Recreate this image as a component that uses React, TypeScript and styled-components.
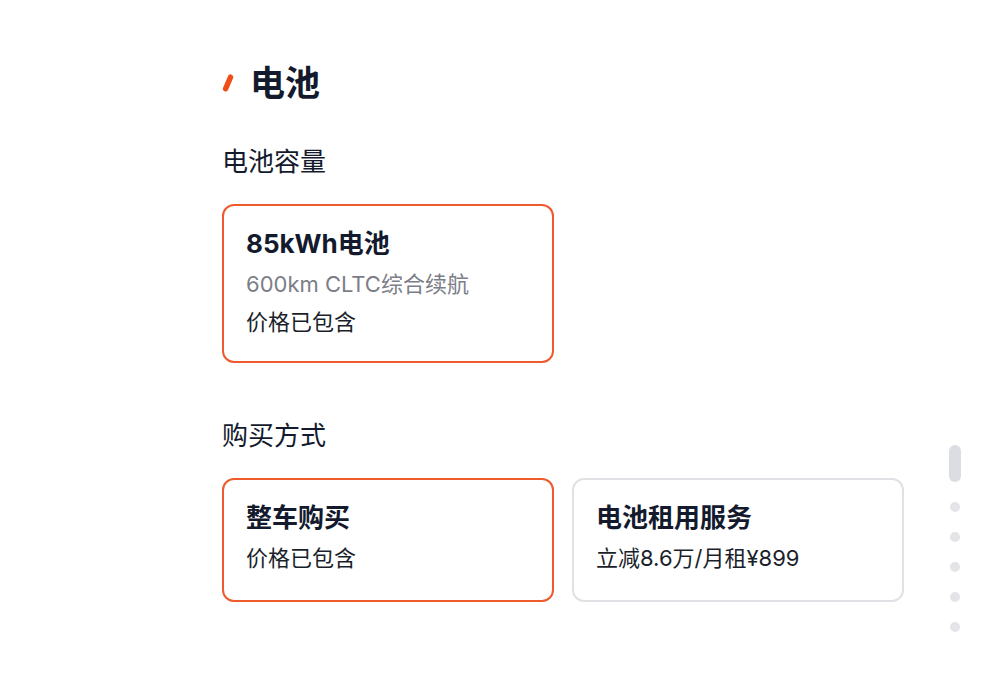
import React from "react";
import styled, { createGlobalStyle } from "styled-components";

const GlobalStyle = createGlobalStyle`
  html, body {
    margin: 0;
    padding: 0;
    background: #ffffff;
  }
  body {
    font-family: Inter, "Noto Sans CJK SC", sans-serif;
    color: #141a2e;
  }
`;

const Page = styled.div`
  padding: 61px 0 40px 222px;
  min-height: 696px;
  box-sizing: border-box;
`;

const Heading = styled.div`
  display: flex;
  align-items: center;
  gap: 16px;
  margin-bottom: 40px;

  & h2 {
    margin: 0;
    font-size: 35px;
    line-height: 44px;
    font-weight: 700;
    color: #141a2e;
  }
`;

const SectionLabel = styled.div<{ $top?: number }>`
  font-size: 26px;
  line-height: 34px;
  font-weight: 400;
  color: #141a2e;
  margin-top: ${(p) => p.$top || 0}px;
  margin-bottom: 25px;
`;

const Options = styled.div<{ $minHeight?: number }>`
  display: grid;
  grid-template-columns: 332px 332px;
  column-gap: 18px;
  & > * {
    min-height: ${(p) => p.$minHeight || 0}px;
  }
`;

const Card = styled.div<{ $active?: boolean }>`
  box-sizing: border-box;
  border: 2px solid ${(p) => (p.$active ? "#ee5a2b" : "#e0e1e4")};
  border-radius: 12px;
  padding: 22px 22px 20px 22px;
  background: #ffffff;

  .card-title {
    font-size: 26px;
    line-height: 32px;
    font-weight: 700;
    color: #141a2e;
    margin-bottom: 5px;
  }

  .card-line {
    font-size: 22px;
    line-height: 38px;
    color: #1b1f2c;

    &.muted {
      color: #7b7e88;
    }
  }
`;

const ScrollDots = styled.div`
  position: fixed;
  right: 42px;
  top: 445px;
  display: flex;
  flex-direction: column;
  align-items: center;
  gap: 20px;
`;

const Dot = styled.span<{ $active?: boolean }>`
  display: block;
  width: ${(p) => (p.$active ? 12 : 10)}px;
  height: ${(p) => (p.$active ? 37 : 10)}px;
  border-radius: 6px;
  background: ${(p) => (p.$active ? "#dcdde2" : "#e3e4e8")};
`;

const Slash = () => (
  <svg width="12" height="18" viewBox="0 0 12 18">
    <line
      x1="8.5"
      y1="3.2"
      x2="3.6"
      y2="14.8"
      stroke="#f04d17"
      strokeWidth="5.5"
      strokeLinecap="round"
    />
  </svg>
);

export default function App() {
  return (
    <>
      <GlobalStyle />
      <Page>
        <Heading>
          <Slash />
          <h2>电池</h2>
        </Heading>

        <SectionLabel>电池容量</SectionLabel>
        <Options>
          <Card $active>
            <div className="card-title">85kWh电池</div>
            <div className="card-line muted">600km CLTC综合续航</div>
            <div className="card-line">价格已包含</div>
          </Card>
        </Options>

        <SectionLabel $top={56}>购买方式</SectionLabel>
        <Options $minHeight={124}>
          <Card $active>
            <div className="card-title">整车购买</div>
            <div className="card-line">价格已包含</div>
          </Card>
          <Card>
            <div className="card-title">电池租用服务</div>
            <div className="card-line">立减8.6万/月租¥899</div>
          </Card>
        </Options>
      </Page>
      <ScrollDots>
        <Dot $active />
        <Dot />
        <Dot />
        <Dot />
        <Dot />
        <Dot />
      </ScrollDots>
    </>
  );
}
